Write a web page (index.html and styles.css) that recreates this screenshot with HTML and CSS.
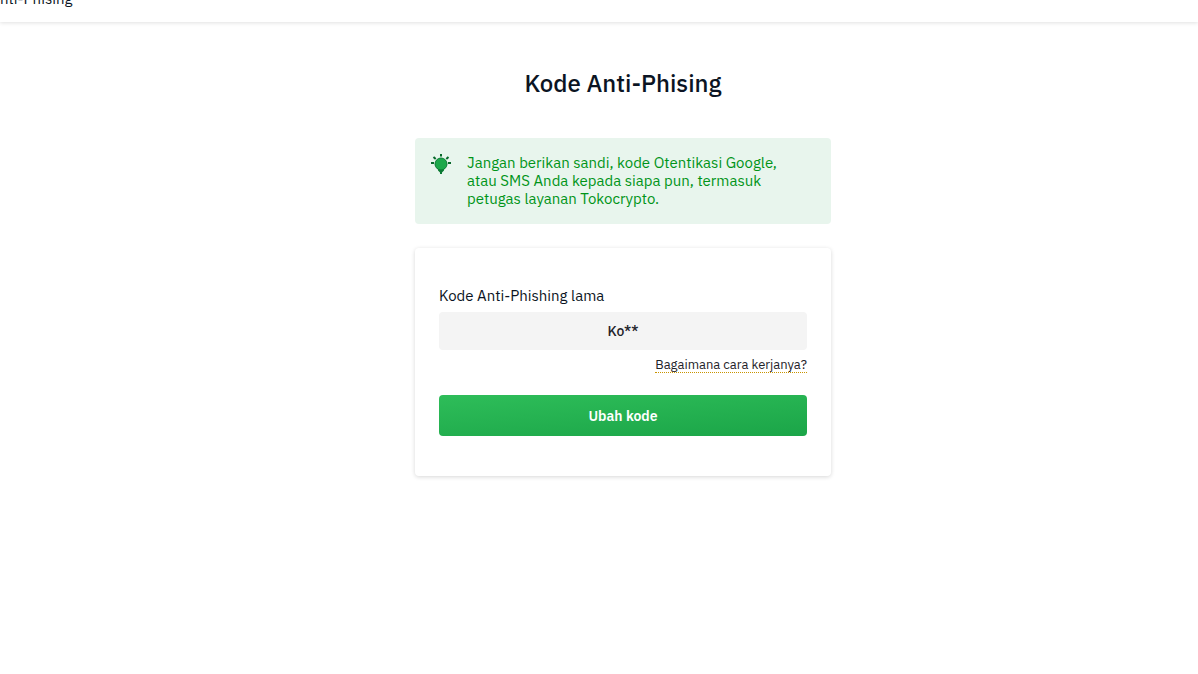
FILE: index.html
```html
<!DOCTYPE html>
<html lang="id">
<head>
    <meta charset="UTF-8">
    <meta name="viewport" content="width=device-width, initial-scale=1.0">
    <title>Kode Anti-Phising</title>
    <link rel="stylesheet" href="styles.css">
</head>
<body>
    <header class="topbar">
        <span>nti-Phising</span>
    </header>

    <main class="page">
        <h1>Kode Anti-Phising</h1>

        <div class="notice">
            <svg class="notice-icon" width="20" height="20" viewBox="0 0 20 20" aria-hidden="true">
                <path d="M7 14.500h6v2L11 18.500V20H9v-1.500L7 16.500z" fill="#0b7a34"/>
                <circle cx="10" cy="10" r="6" fill="#1ca84a" stroke="#0b7a34"/>
                <path d="M10 0v2.500M0 9h3M17 9h3M2.500 3l2.200 2M17.500 3l-2.200 2" fill="none" stroke="#08692b" stroke-width="2"/>
            </svg>
            <p>Jangan berikan sandi, kode Otentikasi Google, atau SMS Anda kepada siapa pun, termasuk petugas layanan Tokocrypto.</p>
        </div>

        <form class="card">
            <label for="oldCode">Kode Anti-Phishing lama</label>
            <input type="text" id="oldCode" value="Ko**" readonly>
            <a href="#" class="help">Bagaimana cara kerjanya?</a>
            <button type="button">Ubah kode</button>
        </form>
    </main>
</body>
</html>
```

FILE: styles.css
```css
* {
    box-sizing: border-box;
}

body {
    margin: 0;
    font-family: "IBM Plex Sans", "Noto Sans", sans-serif;
    font-size: 15px;
    line-height: 18px;
    color: #0b1423;
    background-color: #fff;
}

.topbar {
    margin-top: -10px;
    padding-bottom: 14px;
    box-shadow: 0 1px 4px rgba(0,0,0,0.12);
}

.page {
    display: flex;
    flex-direction: column;
    align-items: center;
    padding: 45px 0 40px 48px;
}

h1 {
    margin: 0 0 39px;
    font-size: 24px;
    font-weight: 500;
    line-height: 32px;
}

.notice {
    display: flex;
    gap: 16px;
    width: 100%;
    max-width: 416px;
    margin-bottom: 24px;
    padding: 16px 32px 16px 16px;
    border-radius: 4px;
    color: #009418;
    background-color: #e8f5ed;
}

.notice-icon {
    flex-shrink: 0;
}

.notice p {
    margin: 0;
}

.card {
    display: flex;
    flex-direction: column;
    width: 100%;
    max-width: 416px;
    padding: 39px 24px 40px;
    border-radius: 4px;
    background-color: #fff;
    box-shadow: 0 1px 4px rgba(0,0,0,0.16);
}

.card label {
    margin-bottom: 7px;
}

.card input {
    width: 100%;
    height: 38px;
    border: none;
    border-radius: 4px;
    font: inherit;
    font-size: 14px;
    font-weight: 500;
    text-align: center;
    color: #1e2329;
    background-color: #f4f4f4;
}

.help {
    align-self: flex-end;
    margin: 7px 0 22px;
    border-bottom: 1px dotted #c99400;
    font-size: 13px;
    line-height: 15px;
    color: #1e2329;
    text-decoration: none;
}

.card button {
    height: 41px;
    border: none;
    border-radius: 4px;
    font: inherit;
    font-size: 14px;
    font-weight: 600;
    color: #fff;
    background: linear-gradient(176deg, #2ebd59, #1ba548);
    cursor: pointer;
}
```
